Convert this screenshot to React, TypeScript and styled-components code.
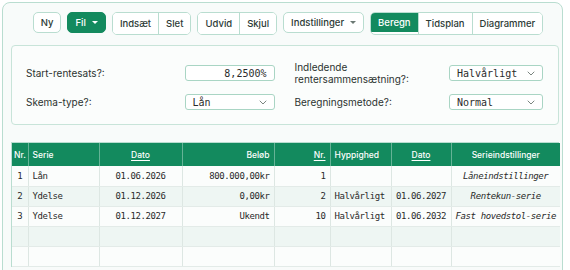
import React, { FC } from 'react';
import styled, { createGlobalStyle, css } from 'styled-components';

const GREEN = '#138a5e';
const LINE = '#b9ddd0';
const MONO = '"DejaVu Sans Mono", "Liberation Mono", monospace';

const GlobalStyle = createGlobalStyle`
  html, body {
    margin: 0;
    padding: 0;
    background: #ffffff;
    font-family: Inter, "Noto Sans", sans-serif;
    color: #27332f;
  }
  #root {
    height: 270px;
    overflow: hidden;
  }
`;

const Card = styled.div`
  margin: 2px 7px 0 2px;
  height: 300px;
  box-sizing: border-box;
  border: 1px solid ${LINE};
  border-radius: 8px;
  background: #f8fbfa;
  padding: 9px 3px 0 8px;
  display: flex;
  flex-direction: column;
`;

const Toolbar = styled.div`
  display: flex;
  justify-content: center;
  gap: 6px;
  padding-left: 6px;
`;

const Group = styled.div`
  display: flex;
  border: 1px solid ${LINE};
  border-radius: 5px;
  overflow: hidden;
  background: #fff;
`;

const Btn = styled.button<{ $active?: boolean; $solo?: boolean }>`
  height: 21px;
  box-sizing: border-box;
  padding: 0 7px;
  display: flex;
  align-items: center;
  gap: 6px;
  font-family: Inter, sans-serif;
  font-size: 9.5px;
  font-weight: 500;
  color: #2c3a35;
  background: #fff;
  border: none;
  border-left: 1px solid ${LINE};
  &:first-child {
    border-left: none;
  }
  ${(p) =>
    p.$solo &&
    css`
      border: 1px solid ${LINE};
      border-radius: 5px;
      &:first-child {
        border-left: 1px solid ${LINE};
      }
    `}
  ${(p) =>
    p.$active &&
    css`
      background: ${GREEN};
      color: #fff;
      border-color: ${GREEN} !important;
      height: ${p.$solo ? '21px' : '19px'};
    `}
`;

const Caret = styled.span<{ $light?: boolean }>`
  width: 0;
  height: 0;
  border-left: 3px solid transparent;
  border-right: 3px solid transparent;
  border-top: 3px solid ${(p) => (p.$light ? '#fff' : '#6b7873')};
`;

const Panel = styled.div`
  margin-top: 10px;
  border: 1px solid #c8e4d9;
  border-radius: 4px;
  background: #fbfdfc;
  padding: 15px 15px 14px 14px;
  display: grid;
  grid-template-columns: 1fr 1fr;
  column-gap: 20px;
  row-gap: 9px;
`;

const Field = styled.div<{ $ctl: number }>`
  display: grid;
  grid-template-columns: 1fr ${(p) => p.$ctl}px;
  align-items: center;
  min-height: 16px;
`;

const Label = styled.label`
  font-size: 10px;
  line-height: 12px;
  color: #2b3330;
`;

const Control = styled.div<{ $right?: boolean }>`
  height: 16px;
  box-sizing: border-box;
  border: 1px solid #a9d5c4;
  border-radius: 3px;
  background: #fff;
  display: flex;
  align-items: center;
  justify-content: ${(p) => (p.$right ? 'flex-end' : 'space-between')};
  padding: 0 7px 0 7px;
  font-family: ${MONO};
  font-size: 10px;
  color: #2b2b2b;
`;

const Chevron: FC = () => (
  <svg width="8" height="5" viewBox="0 0 8 5" fill="none">
    <path d="M1 1l3 3 3-3" stroke="#7b8580" strokeWidth="1" strokeLinecap="round" strokeLinejoin="round" />
  </svg>
);

const TableWrap = styled.div`
  margin-top: 17px;
  border: 1px solid ${LINE};
  border-bottom: none;
  background: #fff;
`;

const Table = styled.table`
  width: 100%;
  border-collapse: collapse;
  table-layout: fixed;
`;

type Align = 'left' | 'center' | 'right';

const Th = styled.th<{ $align: Align; $sort?: boolean }>`
  background: ${GREEN};
  color: #fff;
  height: 23px;
  padding: 0 4px;
  font-family: Inter, sans-serif;
  font-size: 8.5px;
  font-weight: 500;
  text-align: ${(p) => p.$align};
  border-left: 1px solid rgba(255, 255, 255, 0.35);
  &:first-child {
    border-left: none;
    padding: 0 2px;
  }
  span {
    text-decoration: ${(p) => (p.$sort ? 'underline' : 'none')};
    text-underline-offset: 2px;
  }
`;

const Tr = styled.tr<{ $odd: boolean }>`
  background: ${(p) => (p.$odd ? '#eef6f3' : '#fbfdfc')};
`;

const Td = styled.td<{ $align: Align; $italic?: boolean }>`
  height: 20px;
  box-sizing: border-box;
  padding: 0 4px;
  font-family: ${MONO};
  font-size: 9px;
  letter-spacing: -0.4px;
  color: #2a2a2a;
  text-align: ${(p) => p.$align};
  font-style: ${(p) => (p.$italic ? 'italic' : 'normal')};
  border-left: 1px solid #dde7e3;
  border-bottom: 1px solid #e3ebe8;
  white-space: nowrap;
  &:first-child {
    border-left: none;
  }
`;

const columns: { title: string; width: number; align: Align; cell: Align; sort?: boolean; italic?: boolean }[] = [
  { title: 'Nr.', width: 16, align: 'left', cell: 'center' },
  { title: 'Serie', width: 71, align: 'left', cell: 'left' },
  { title: 'Dato', width: 83, align: 'center', cell: 'center', sort: true },
  { title: 'Beløb', width: 92, align: 'right', cell: 'right' },
  { title: 'Nr.', width: 56, align: 'right', cell: 'right', sort: true },
  { title: 'Hyppighed', width: 61, align: 'left', cell: 'left' },
  { title: 'Dato', width: 60, align: 'center', cell: 'center', sort: true },
  { title: 'Serieindstillinger', width: 109, align: 'center', cell: 'center', italic: true },
];

const rows: string[][] = [
  ['1', 'Lån', '01.06.2026', '800.000,00kr', '1', '', '', 'Låneindstillinger'],
  ['2', 'Ydelse', '01.12.2026', '0,00kr', '2', 'Halvårligt', '01.06.2027', 'Rentekun-serie'],
  ['3', 'Ydelse', '01.12.2027', 'Ukendt', '10', 'Halvårligt', '01.06.2032', 'Fast hovedstol-serie'],
  ['', '', '', '', '', '', '', ''],
  ['', '', '', '', '', '', '', ''],
];

const App: FC = () => (
  <>
    <GlobalStyle />
    <Card>
      <Toolbar>
        <Btn $solo>Ny</Btn>
        <Btn $solo $active>
          Fil <Caret $light />
        </Btn>
        <Group>
          <Btn>Indsæt</Btn>
          <Btn>Slet</Btn>
        </Group>
        <Group>
          <Btn>Udvid</Btn>
          <Btn>Skjul</Btn>
        </Group>
        <Btn $solo>
          Indstillinger <Caret />
        </Btn>
        <Group>
          <Btn $active>Beregn</Btn>
          <Btn>Tidsplan</Btn>
          <Btn>Diagrammer</Btn>
        </Group>
      </Toolbar>

      <Panel>
        <Field $ctl={90}>
          <Label>Start-rentesats?:</Label>
          <Control $right>8,2500%</Control>
        </Field>
        <Field $ctl={94}>
          <Label>
            Indledende
            <br />
            rentersammensætning?:
          </Label>
          <Control>
            Halvårligt <Chevron />
          </Control>
        </Field>
        <Field $ctl={90}>
          <Label>Skema-type?:</Label>
          <Control>
            Lån <Chevron />
          </Control>
        </Field>
        <Field $ctl={94}>
          <Label>Beregningsmetode?:</Label>
          <Control>
            Normal <Chevron />
          </Control>
        </Field>
      </Panel>

      <TableWrap>
        <Table>
          <colgroup>
            {columns.map((c, i) => (
              <col key={i} style={{ width: c.width }} />
            ))}
          </colgroup>
          <thead>
            <tr>
              {columns.map((c, i) => (
                <Th key={i} $align={c.align} $sort={c.sort}>
                  <span>{c.title}</span>
                </Th>
              ))}
            </tr>
          </thead>
          <tbody>
            {rows.map((r, ri) => (
              <Tr key={ri} $odd={ri % 2 === 1}>
                {r.map((v, ci) => (
                  <Td key={ci} $align={columns[ci].cell} $italic={columns[ci].italic}>
                    {v}
                  </Td>
                ))}
              </Tr>
            ))}
          </tbody>
        </Table>
      </TableWrap>
    </Card>
  </>
);

export default App;
